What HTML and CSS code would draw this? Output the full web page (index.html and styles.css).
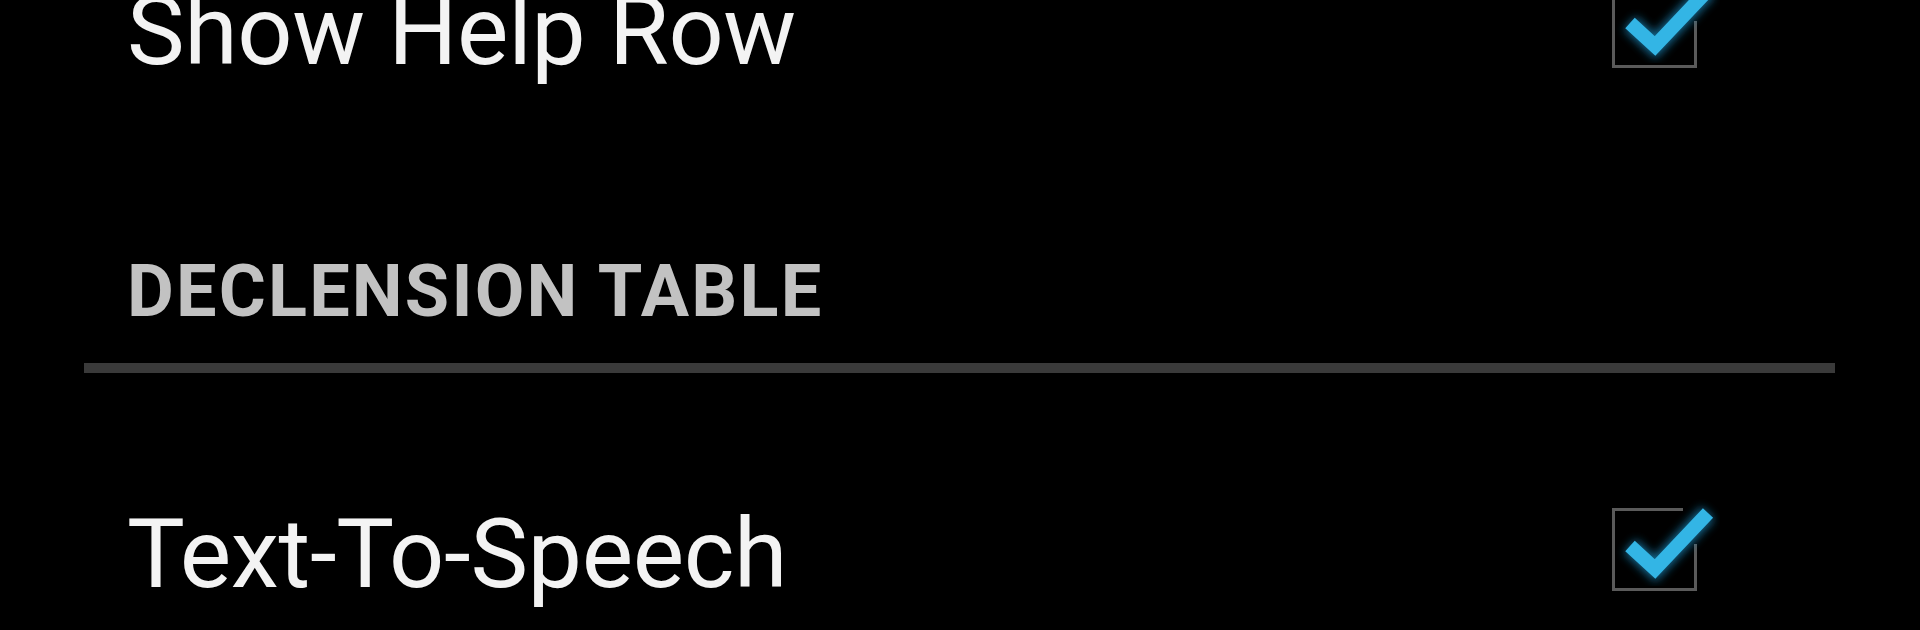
FILE: index.html
```html
<!DOCTYPE html>
<html lang="en">
<head>
<meta charset="utf-8">
<title>Settings</title>
<link rel="stylesheet" href="styles.css">
</head>
<body>
<div class="prefs">
  <div class="pref-row">
    <span class="pref-title">Show Help Row</span>
    <svg class="checkbox" viewBox="0 0 120 123" width="120" height="123" aria-hidden="true">
      <defs>
        <filter id="glow1" x="-30%" y="-30%" width="160%" height="160%">
          <feGaussianBlur stdDeviation="5"/>
        </filter>
      </defs>
      <path d="M83 21.5 H13.5 V101.5 H95.5 V56" fill="none" stroke="#5a5a5a" stroke-width="3"/>
      <polyline points="30,58 55,81 108,25" fill="none" stroke="#1a8fc4" stroke-width="18" opacity="0.75" filter="url(#glow1)"/>
      <polyline points="30,58 55,81 108,25" fill="none" stroke="#33b5e5" stroke-width="14" stroke-linejoin="miter"/>
    </svg>
  </div>

  <div class="pref-category">
    <div class="category-title">DECLENSION TABLE</div>
    <div class="category-divider"></div>
  </div>

  <div class="pref-row pref-row-second">
    <span class="pref-title">Text-To-Speech</span>
    <svg class="checkbox" viewBox="0 0 120 123" width="120" height="123" aria-hidden="true">
      <defs>
        <filter id="glow2" x="-30%" y="-30%" width="160%" height="160%">
          <feGaussianBlur stdDeviation="5"/>
        </filter>
      </defs>
      <path d="M83 21.5 H13.5 V101.5 H95.5 V56" fill="none" stroke="#5a5a5a" stroke-width="3"/>
      <polyline points="30,58 55,81 108,25" fill="none" stroke="#1a8fc4" stroke-width="18" opacity="0.75" filter="url(#glow2)"/>
      <polyline points="30,58 55,81 108,25" fill="none" stroke="#33b5e5" stroke-width="14" stroke-linejoin="miter"/>
    </svg>
  </div>
</div>
</body>
</html>
```

FILE: styles.css
```css
html, body {
  margin: 0;
  padding: 0;
  background: #000;
  overflow: hidden;
}

body {
  width: 1920px;
  height: 630px;
  font-family: Roboto, "Noto Sans", sans-serif;
}

.prefs {
  display: flex;
  flex-direction: column;
  margin-top: -49px;
}

.pref-row {
  height: 160px;
  display: flex;
  align-items: center;
  justify-content: space-between;
  padding-left: 127px;
  padding-right: 200px;
}

.pref-title {
  font-size: 97px;
  line-height: 1;
  color: #f3f3f3;
  font-weight: 400;
  letter-spacing: -0.4px;
}

.checkbox {
  display: block;
  margin-bottom: 10px;
}

.pref-category {
  padding-top: 145px;
  display: flex;
  flex-direction: column;
}

.category-title {
  font-size: 72px;
  line-height: 1;
  font-weight: 700;
  color: #c2c2c2;
  padding-left: 127px;
  letter-spacing: 2.2px;
}

.category-divider {
  margin: 35px 85px 0 84px;
  height: 10px;
  background: #3a3a3a;
}

.pref-row-second {
  margin-top: 101px;
}
```
